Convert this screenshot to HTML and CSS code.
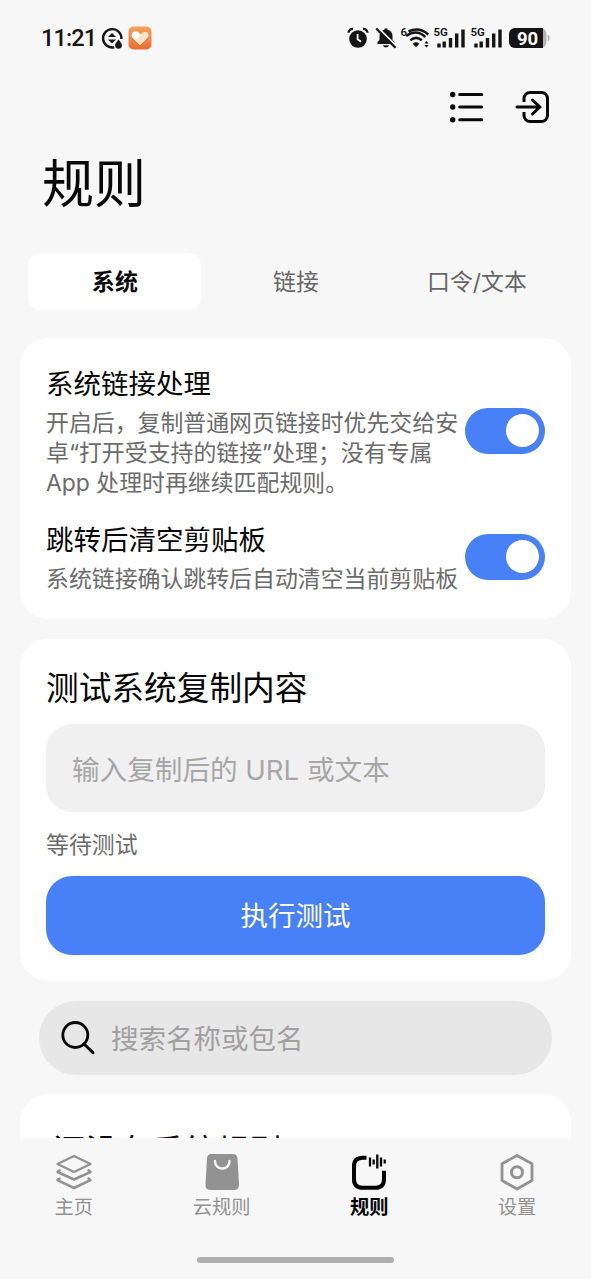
FILE: index.html
```html
<!DOCTYPE html>
<html lang="zh-CN">
<head>
<meta charset="utf-8">
<title>规则</title>
<link rel="stylesheet" href="styles.css">
</head>
<body>
<div class="screen">
  <header class="status-bar">
    <div class="status-left">
      <span class="clock">11:21</span>
      <svg class="icon-record" width="23" height="23" viewBox="0 0 23 23">
        <path d="M13.2 20.3A9.2 9.2 0 1 1 20.4 12" fill="none" stroke="#151515" stroke-width="2.400"/>
        <path d="M7 10L11 6l4 4zM7 12.600h8L11 16.600z" fill="#151515"/>
        <path d="M17.500 12.500c2 2.700 3.400 4 3.400 5.800a3.400 3.400 0 0 1-6.800 0c0-1.800 1.400-3.100 3.400-5.800z" fill="#151515"/>
      </svg>
      <svg class="icon-heart" width="24" height="24" viewBox="0 0 24 24">
        <defs>
          <linearGradient id="orange" x1="0" y1="0" x2="0" y2="1"><stop offset="0" stop-color="#f6a15c"/><stop offset="1" stop-color="#e76e31"/></linearGradient>
        </defs>
        <rect x=".5" y=".5" width="23" height="23" rx="5" fill="url(#orange)"/>
        <path d="M12 19L4.600 11.700C1.500 7.800 7 2.600 11 6.800l7 6.400z" fill="#fff"/>
        <path d="M12 19l-4.500-4.500L14.500 6.600c3.600-2.900 8.300 1.300 5.200 5z" fill="#ffe4cb"/>
      </svg>
    </div>
    <div class="status-right">
      <svg width="22" height="22" viewBox="0 0 22 22">
        <circle cx="11" cy="12" r="8.800" fill="#151515"/>
        <path d="M1.500 5.800A4 4 0 0 1 6 2M20.500 5.800A4 4 0 0 0 16 2" fill="none" stroke="#151515" stroke-width="2.300"/>
        <path d="M10.600 7v5.300l3.400 2.400" fill="none" stroke="#f7f7f7" stroke-width="1.800"/>
      </svg>
      <svg class="icon-mute" width="22" height="22" viewBox="0 0 22 22">
        <path d="M2.500 17V15L4.500 13V9a6.500 6.500 0 0 1 5-6.300V1.500h3v1.200A6.500 6.500 0 0 1 17.500 9v4l2 2v2zM8 18.300h6c-.8 3-5.200 3-6 0z" fill="#151515"/>
        <path d="M3 .8L22 19.800" stroke="#f7f7f7" stroke-width="2"/>
        <path d="M1.200 1.500L20.500 20.800" stroke="#151515" stroke-width="2.300"/>
      </svg>
      <svg class="icon-wifi" width="29" height="24" viewBox="0 0 29 24">
        <text x="-.5" y="9.500" class="glyph-label">6</text>
        <path d="M7.500 5.500Q18 .5 27.300 8.500M5.300 10Q15.500 2.600 24.300 11M9.300 14.200Q15 9.600 20.800 14.200" fill="none" stroke="#151515" stroke-width="2.500"/>
        <path d="M11.700 17.700Q15 15 18.300 17.700L15 21.300z" fill="#151515"/>
        <path d="M23.300 17.500L25.500 15l2.200 2.500zM23.300 19h4.400l-2.200 2.500z" fill="#151515"/>
      </svg>
      <svg class="icon-signal" width="32" height="24" viewBox="0 0 32 24">
        <text x="-.5" y="10" class="glyph-label">5G</text>
        <path d="M5 17.500v4M10.200 15.500v6M16.500 12v9.500M22.700 7.500v14M29 3.500v18" stroke="#151515" stroke-width="3.400"/>
      </svg>
      <svg class="icon-signal second" width="32" height="24" viewBox="0 0 32 24">
        <text x="-.5" y="10" class="glyph-label">5G</text>
        <path d="M5 17.500v4M10.200 15.500v6M16.500 12v9.500M22.700 7.500v14M29 3.500v18" stroke="#151515" stroke-width="3.400"/>
      </svg>
      <svg class="icon-battery" width="41" height="22" viewBox="0 0 41 22">
        <rect x="0" y="1" width="37.500" height="20" rx="6" fill="#b5b5b5"/>
        <path d="M6 1h28v20H6a6 6 0 0 1-6-6V7a6 6 0 0 1 6-6z" fill="#151515"/>
        <path d="M38.700 8q2 0 2 3t-2 3z" fill="#b5b5b5"/>
        <text x="18.500" y="17.500" text-anchor="middle" class="battery-level">90</text>
      </svg>
    </div>
  </header>

  <main class="content">
    <div class="actions">
      <svg width="36" height="34" viewBox="0 0 36 34">
        <g fill="#080808"><circle cx="3.700" cy="4.500" r="2.700"/><circle cx="3.700" cy="17" r="2.700"/><circle cx="3.700" cy="29.700" r="2.700"/></g>
        <path d="M10.700 4.500h22M10.700 17h22M10.700 29.700h22" stroke="#080808" stroke-width="3" stroke-linecap="round"/>
      </svg>
      <svg width="36" height="34" viewBox="0 0 36 34">
        <path d="M9 12V8.500a6 6 0 0 1 6-6h11.500a6 6 0 0 1 6 6v17a6 6 0 0 1-6 6H15a6 6 0 0 1-6-6V22" fill="none" stroke="#080808" stroke-width="3"/>
        <path d="M2 17h23M17.500 10l7.300 7-7.300 7" fill="none" stroke="#080808" stroke-width="3" stroke-linecap="round"/>
      </svg>
    </div>
    <h1 class="page-title">规则</h1>

    <div class="tabs">
      <div class="tab active">系统</div>
      <div class="tab">链接</div>
      <div class="tab">口令/文本</div>
    </div>

    <section class="card settings">
      <div class="setting">
        <div class="setting-text">
          <h2 class="setting-title">系统链接处理</h2>
          <p class="setting-desc">开启后，复制普通网页链接时优先交给安<br>卓“打开受支持的链接”处理；没有专属<br>App 处理时再继续匹配规则。</p>
        </div>
        <div class="switch"><div class="knob"></div></div>
      </div>
      <div class="setting">
        <div class="setting-text">
          <h2 class="setting-title">跳转后清空剪贴板</h2>
          <p class="setting-desc">系统链接确认跳转后自动清空当前剪贴板</p>
        </div>
        <div class="switch"><div class="knob"></div></div>
      </div>
    </section>

    <section class="card test">
      <h2 class="card-title">测试系统复制内容</h2>
      <div class="field">输入复制后的 URL 或文本</div>
      <p class="test-status">等待测试</p>
      <div class="button">执行测试</div>
    </section>

    <div class="search">
      <svg width="36" height="36" viewBox="0 0 36 36">
        <circle cx="15.300" cy="15" r="12.500" fill="none" stroke="#080808" stroke-width="2.800"/>
        <path d="M24 24l9 8.700" stroke="#080808" stroke-width="3" stroke-linecap="round"/>
      </svg>
      <span>搜索名称或包名</span>
    </div>

    <section class="card empty">
      <h2 class="card-title">还没有系统规则</h2>
    </section>
  </main>

  <nav class="nav">
    <div class="nav-items">
      <div class="nav-item">
        <svg width="38" height="38" viewBox="0 0 38 38" fill="none" stroke="#929292" stroke-width="2.500" stroke-linejoin="round" stroke-linecap="round">
          <path d="M19 3L35.500 11 19 19 2.500 11z"/>
          <path d="M4.500 17.300L2.500 19 19 26.500 35.500 19l-2-1.700M4.500 25.500l-2 1.700L19 35l16.500-7.800-2-1.700"/>
        </svg>
        <span>主页</span>
      </div>
      <div class="nav-item">
        <svg width="38" height="38" viewBox="0 0 38 38">
          <path d="M8 1h22q4 0 4.500 4.500L36 31q0 6-5 6H7.500q-5.500 0-5-6L4 5.500Q4.300 1 8 1z" fill="#929292"/>
          <path d="M12 8c0 10 14.500 10 14.500 0" fill="none" stroke="#f7f7f7" stroke-width="2.400" stroke-linecap="round"/>
        </svg>
        <span>云规则</span>
      </div>
      <div class="nav-item active">
        <svg width="38" height="38" viewBox="0 0 38 38" fill="none" stroke="#050505">
          <path d="M16.500 4.800H13Q4 4.800 4 13v13q0 8.800 8.500 8.800h13q8.500 0 8.500-8.800v-8.300" stroke-width="4"/>
          <path d="M20 4.500v9M23.700 6.500v5M27.300 1.500v14M31 4.500v9M34.700 6.500v4" stroke-width="2.300"/>
        </svg>
        <span>规则</span>
      </div>
      <div class="nav-item">
        <svg width="38" height="38" viewBox="0 0 38 38" fill="none" stroke="#929292" stroke-width="2.800" stroke-linejoin="round">
          <path d="M19 2.500L34 10.800V27.500L19 36 4 27.500V10.800z"/>
          <circle cx="19" cy="19.300" r="5.500" stroke-width="3"/>
        </svg>
        <span>设置</span>
      </div>
    </div>
    <div class="home-indicator"></div>
  </nav>
</div>
</body>
</html>
```
FILE: styles.css
```css
* { box-sizing: border-box; }
body {
  margin: 0;
  background: #f7f7f7;
  color: #080808;
  font-family: "Inter", "Noto Sans CJK SC", sans-serif;
}
h1, h2, p { margin: 0; font-weight: 400; white-space: nowrap; }
svg { display: block; flex: none; overflow: visible; }
.screen { height: 1279px; width: 591px; display: flex; flex-direction: column; overflow: hidden; }

.status-bar { height: 76px; flex: none; display: flex; justify-content: space-between; padding: 0 41px 0 41px; align-items: center; }
.status-left, .status-right { display: flex; align-items: center; }
.clock { width: 60px; font: 500 23.5px/28px Roboto, sans-serif; letter-spacing: -.9px; color: #151515; white-space: nowrap; }
.icon-heart { margin-left: 4px; }
.icon-mute { margin-left: 6px; }
.icon-wifi { margin-left: 4px; }
.icon-signal { margin-left: 4px; }
.icon-signal.second { margin-left: 5px; }
.icon-battery { margin-left: 6px; }
.glyph-label { font: 600 11.5px Roboto, sans-serif; fill: #151515; }
.battery-level { font: 700 18.5px Roboto, sans-serif; fill: #fff; }

.content { flex: 1; min-height: 0; overflow: hidden; padding: 14px 20px 0; }
.actions { display: flex; justify-content: flex-end; gap: 30px; padding-right: 20px; }
.page-title { margin: 26px 0 0 22px; font-size: 52px; line-height: 70px; }
.tabs { display: grid; grid-template-columns: repeat(3, 1fr); gap: 8px; height: 57px; margin: 33px 8px 28px; }
.tab { display: flex; align-items: center; justify-content: center; border-radius: 13px; padding: 0 0 3px 1px; font-size: 22.9px; color: #666; }
.tab.active { background: #fff; color: #080808; font-weight: 700; }

.card { background: #fff; border-radius: 28px; padding: 25px 26px; margin-bottom: 20px; }
.settings { display: grid; gap: 21px; }
.setting { display: flex; align-items: center; justify-content: space-between; }
.setting-text { width: 412px; }
.setting-title { font-size: 27.5px; line-height: 40px; padding-top: 1px; margin-bottom: 4px; }
.setting-desc { font-size: 22.9px; line-height: 30px; color: #6b6b6b; }
.switch { width: 80px; height: 46px; border-radius: 23px; background: #4880f7; display: flex; align-items: center; justify-content: flex-end; padding-right: 6px; flex: none; }
.knob { width: 33px; height: 33px; border-radius: 50%; background: #fff; }

.card-title { font-size: 32.7px; line-height: 46px; }
.test { padding-top: 26px; padding-bottom: 26px; }
.field { margin-top: 13px; height: 88px; border-radius: 26px; background: #f0f0f0; color: #a6a6a6; display: flex; align-items: center; padding: 0 0 1px 26px; font-size: 27.6px; white-space: pre; }
.test-status { margin-top: 18px; font-size: 22.9px; line-height: 30px; color: #6b6b6b; }
.button { margin-top: 16px; height: 79px; border-radius: 26px; background: #4880f7; color: #fff; display: flex; align-items: center; justify-content: center; padding-bottom: 3px; font-size: 27.5px; }

.search { margin: 0 19px 19px; height: 74px; border-radius: 37px; background: #e7e7e7; color: #a0a0a0; display: flex; align-items: center; gap: 15px; padding-left: 21px; font-size: 27.5px; }
.search span { padding-bottom: 2px; }
.empty { height: 120px; padding: 34px 33px; }

.nav { height: 141px; flex: none; background: #f7f7f7; padding-top: 15px; }
.nav-items { display: grid; grid-template-columns: repeat(4, 1fr); }
.nav-item { display: flex; flex-direction: column; align-items: center; color: #929292; font-size: 19.3px; line-height: 30px; }
.nav-item span { padding-top: 1px; }
.nav-item.active { color: #050505; font-weight: 700; }
.home-indicator { width: 197px; height: 6px; border-radius: 3px; background: #b0b0b0; margin: 35px auto 0; }
```
